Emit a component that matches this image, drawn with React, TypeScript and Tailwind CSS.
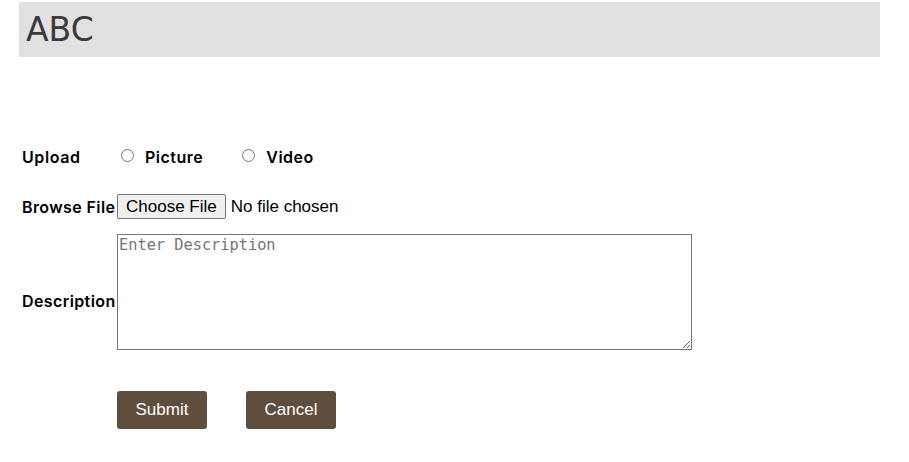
export default function App() {
  return (
    <div className="min-h-[462px] bg-white pt-[2px] text-black [font-family:'DejaVu_Sans',sans-serif]">
      <header className="ml-[19px] flex h-[55px] w-[861px] items-center bg-[#e1e1e1] px-[7px]">
        <h1 className="text-[33px] leading-none text-[#3a3a3a]">ABC</h1>
      </header>

      <form className="mt-[88px] pl-[22px] [font-family:Inter,sans-serif] text-[16px] font-semibold">
        <div className="grid grid-cols-[95px_1fr] items-center">
          <label className="tracking-[0.6px]">Upload</label>
          <div className="flex items-center">
            <label className="flex items-center">
              <input type="radio" name="kind" className="m-0 ml-[4px] -mt-[3px] h-[13px] w-[13px]" />
              <span className="ml-[11px] tracking-[0.5px]">Picture</span>
            </label>
            <label className="ml-[39px] flex items-center">
              <input type="radio" name="kind" className="m-0 -mt-[3px] h-[13px] w-[13px]" />
              <span className="ml-[11px] tracking-[0.5px]">Video</span>
            </label>
          </div>
        </div>

        <div className="mt-[25px] grid grid-cols-[95px_1fr] items-center">
          <label className="tracking-[0.4px]">Browse File</label>
          <div className="flex items-center [font-family:'Liberation_Sans',Arial,sans-serif] text-[17px] font-normal">
            <button
              type="button"
              className="h-[25px] rounded-[2px] border border-[#767676] bg-[#efefef] px-[8px] leading-none"
            >
              Choose File
            </button>
            <span className="ml-[5px]">No file chosen</span>
          </div>
        </div>

        <div className="mt-[14px] grid grid-cols-[95px_1fr] items-center">
          <label className="pt-[18px] tracking-[0.4px]">Description</label>
          <textarea
            placeholder="Enter Description"
            className="h-[116px] w-[575px] border border-[#767676] px-[1px] py-0 [font-family:'DejaVu_Sans_Mono',monospace] text-[15.3px] font-normal leading-[20px] placeholder:text-[#757575]"
          />
        </div>

        <div className="mt-[41px] flex gap-[39px] pl-[95px] [font-family:'Liberation_Sans',Arial,sans-serif] text-[17px] font-normal text-white">
          <button type="button" className="h-[38px] w-[90px] rounded-[3px] bg-[#5f4e3d]">
            Submit
          </button>
          <button type="button" className="h-[38px] w-[90px] rounded-[3px] bg-[#5f4e3d]">
            Cancel
          </button>
        </div>
      </form>
    </div>
  );
}
